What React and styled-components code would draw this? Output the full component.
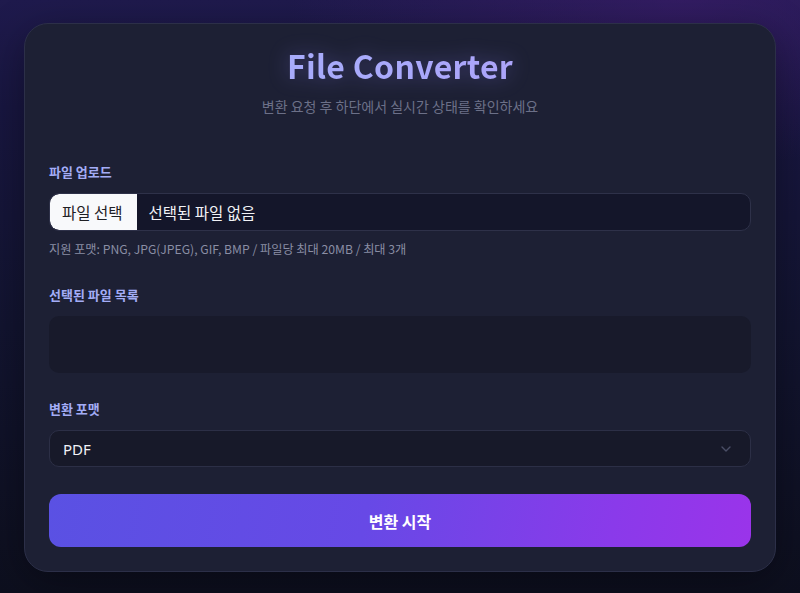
import React from "react";
import styled, { createGlobalStyle } from "styled-components";

const Global = createGlobalStyle`
  * { box-sizing: border-box; }
  html, body { margin: 0; padding: 0; }
  body {
    font-family: "Noto Sans CJK KR", "Noto Sans", sans-serif;
    background: #0e1020;
  }
`;

const Page = styled.div`
  min-height: 593px;
  padding: 23px 24px 21px;
  background:
    radial-gradient(ellipse 70% 40% at 85% 0%, rgba(70, 30, 120, 0.5), transparent 70%),
    linear-gradient(180deg, #1f1a4d 0%, #181640 18%, #121430 55%, #0d0f1e 100%);
`;

const Card = styled.div`
  background: #1d2034;
  border: 1px solid #2c2f48;
  border-radius: 24px;
  padding: 22px 24px 24px;
  box-shadow: 0 10px 40px rgba(0, 0, 0, 0.35);
`;

const Header = styled.header`
  text-align: center;
  margin-bottom: 46px;
`;

const Title = styled.h1`
  margin: 0;
  font-size: 32px;
  line-height: 38px;
  font-weight: 700;
  letter-spacing: 0.3px;
  background: linear-gradient(90deg, #a4b0fb 0%, #a9a9fb 50%, #b29af5 100%);
  -webkit-background-clip: text;
  background-clip: text;
  color: transparent;
  filter: drop-shadow(0 0 10px rgba(140, 130, 255, 0.35));
`;

const Subtitle = styled.p`
  margin: 12px 0 0;
  font-size: 14px;
  line-height: 20px;
  color: #6c7088;
`;

const Form = styled.div`
  display: flex;
  flex-direction: column;
  gap: 26px;
`;

const Section = styled.section`
  display: flex;
  flex-direction: column;
`;

const Label = styled.label`
  font-size: 13px;
  line-height: 20px;
  font-weight: 700;
  color: #a3acf6;
  margin-bottom: 11px;
`;

const FileBox = styled.div`
  display: flex;
  align-items: stretch;
  height: 38px;
  border: 1px solid #2e3149;
  border-radius: 10px;
  background: #14162a;
  overflow: hidden;
`;

const FileButton = styled.span`
  display: flex;
  align-items: center;
  padding: 0 14px 0 12px;
  background: #f8f9fb;
  color: #1f2024;
  font-size: 15.5px;
  font-weight: 400;
  border-top-left-radius: 9px;
  border-bottom-left-radius: 9px;
`;

const FileName = styled.span`
  display: flex;
  align-items: center;
  padding-left: 12px;
  font-size: 15.5px;
  font-weight: 400;
  color: #f1f2f6;
`;

const Help = styled.p`
  margin: 8px 0 0;
  font-size: 12.2px;
  line-height: 20px;
  color: #8a8ea4;
`;

const ListBox = styled.div`
  height: 57px;
  border-radius: 10px;
  background: #181a2b;
`;

const SelectBox = styled.div`
  height: 37px;
  border: 1px solid #2c2f46;
  border-radius: 10px;
  background: #171929;
  display: flex;
  align-items: center;
  justify-content: space-between;
  padding: 0 18px 0 13px;
  font-family: "Noto Sans", sans-serif;
  font-size: 15px;
  color: #f1f2f6;
`;

const Chevron = styled.svg`
  width: 12px;
  height: 12px;
  color: #4a4e66;
`;

const Submit = styled.button`
  margin-top: 1px;
  height: 53px;
  border: none;
  border-radius: 12px;
  background: linear-gradient(100deg, #5a51e3 0%, #6749e6 45%, #8a3aea 80%, #9a34ea 100%);
  color: #ffffff;
  font-family: "Noto Sans CJK KR", sans-serif;
  font-size: 16px;
  font-weight: 700;
  cursor: pointer;
`;

export default function App() {
  return (
    <>
      <Global />
      <Page>
        <Card>
          <Header>
            <Title>File Converter</Title>
            <Subtitle>변환 요청 후 하단에서 실시간 상태를 확인하세요</Subtitle>
          </Header>
          <Form>
            <Section>
              <Label>파일 업로드</Label>
              <FileBox>
                <FileButton>파일 선택</FileButton>
                <FileName>선택된 파일 없음</FileName>
              </FileBox>
              <Help>지원 포맷: PNG, JPG(JPEG), GIF, BMP / 파일당 최대 20MB / 최대 3개</Help>
            </Section>
            <Section>
              <Label>선택된 파일 목록</Label>
              <ListBox />
            </Section>
            <Section>
              <Label>변환 포맷</Label>
              <SelectBox>
                <span>PDF</span>
                <Chevron viewBox="0 0 12 12" fill="none">
                  <path d="M2 4l4 4 4-4" stroke="currentColor" strokeWidth="1.4" strokeLinecap="round" strokeLinejoin="round" />
                </Chevron>
              </SelectBox>
            </Section>
            <Submit>변환 시작</Submit>
          </Form>
        </Card>
      </Page>
    </>
  );
}
